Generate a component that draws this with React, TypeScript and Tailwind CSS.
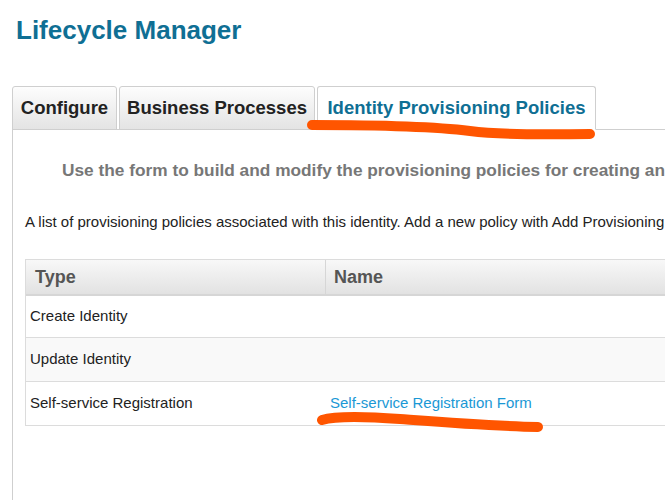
const tabs = [
  { key: 'configure', label: 'Configure', width: 'w-[105px]' },
  { key: 'business', label: 'Business Processes', width: 'w-[196px]' },
  { key: 'policies', label: 'Identity Provisioning Policies', width: 'w-[279px]' },
];

const rows = [
  { type: 'Create Identity', name: '', bg: 'bg-white', h: 'h-[42px]' },
  { type: 'Update Identity', name: '', bg: 'bg-[#f9f9f9]', h: 'h-[44px]' },
  { type: 'Self-service Registration', name: 'Self-service Registration Form', bg: 'bg-white', h: 'h-[43px]' },
];

export default function App() {
  const active = 'policies';

  return (
    <div className="relative w-[665px] h-[500px] overflow-hidden bg-white font-['Liberation_Sans',Arial,sans-serif]">
      <h1 className="ml-[16px] pt-[15px] text-[26px] leading-[30px] font-bold text-[#0f6f94] whitespace-nowrap">
        Lifecycle Manager
      </h1>

      <div className="mt-[41px] pl-[12px] flex gap-[2px] items-end">
        {tabs.map((tab) => {
          const isActive = tab.key === active;
          return (
            <div
              key={tab.key}
              className={`${tab.width} h-[44px] flex items-center justify-center border border-[#cfcfcf] rounded-t-[3px] text-[18.5px] font-bold whitespace-nowrap ${
                isActive
                  ? 'relative z-10 bg-white border-b-white text-[#0f6f94]'
                  : 'bg-gradient-to-b from-[#fdfdfd] to-[#e4e4e4] text-[#222]'
              }`}
            >
              {tab.label}
            </div>
          );
        })}
      </div>

      <div className="-mt-px ml-[12px] w-[900px] h-[400px] border-l border-t border-[#cfcfcf]">
        <p className="mt-[30px] ml-[49px] text-[17.3px] leading-[20px] font-bold text-[#777] whitespace-nowrap">
          Use the form to build and modify the provisioning policies for creating and editing identities.
        </p>
        <p className="mt-[33px] ml-[12px] text-[15px] leading-[18px] text-[#222] whitespace-nowrap">
          A list of provisioning policies associated with this identity. Add a new policy with Add Provisioning Policy.
        </p>

        <div className="mt-[28px] ml-[12px] w-[800px] border border-[#dcdcdc]">
          <div className="h-[36px] flex bg-gradient-to-b from-[#f8f8f8] to-[#e2e2e2] border-b-2 border-[#d6d6d6]">
            <div className="w-[300px] flex items-center pl-[9px] border-r border-[#d6d6d6] text-[18px] font-bold text-[#555]">
              Type
            </div>
            <div className="flex-1 flex items-center pl-[8px] text-[18px] font-bold text-[#555]">Name</div>
          </div>
          {rows.map((row, i) => (
            <div
              key={row.type}
              className={`${row.h} ${row.bg} flex items-center text-[15px] ${i < rows.length - 1 ? 'border-b border-[#dcdcdc]' : ''}`}
            >
              <div className="w-[300px] pl-[4px] text-[#222] whitespace-nowrap">{row.type}</div>
              <div className="flex-1 pl-[4px] text-[#1a98d5] whitespace-nowrap">{row.name}</div>
            </div>
          ))}
        </div>
      </div>

      {/* hand-drawn annotation marks */}
      <svg className="absolute inset-0 pointer-events-none z-20" width="665" height="500" viewBox="0 0 665 500">
        <path
          d="M312 125 C 380 125, 430 126, 470 131 S 560 134, 590 134"
          fill="none"
          stroke="#ff5500"
          strokeWidth="10"
          strokeLinecap="round"
        />
        <path
          d="M322 420 C 335 416, 360 416, 400 419 S 490 426, 538 427"
          fill="none"
          stroke="#ff5500"
          strokeWidth="10"
          strokeLinecap="round"
        />
      </svg>
    </div>
  );
}
